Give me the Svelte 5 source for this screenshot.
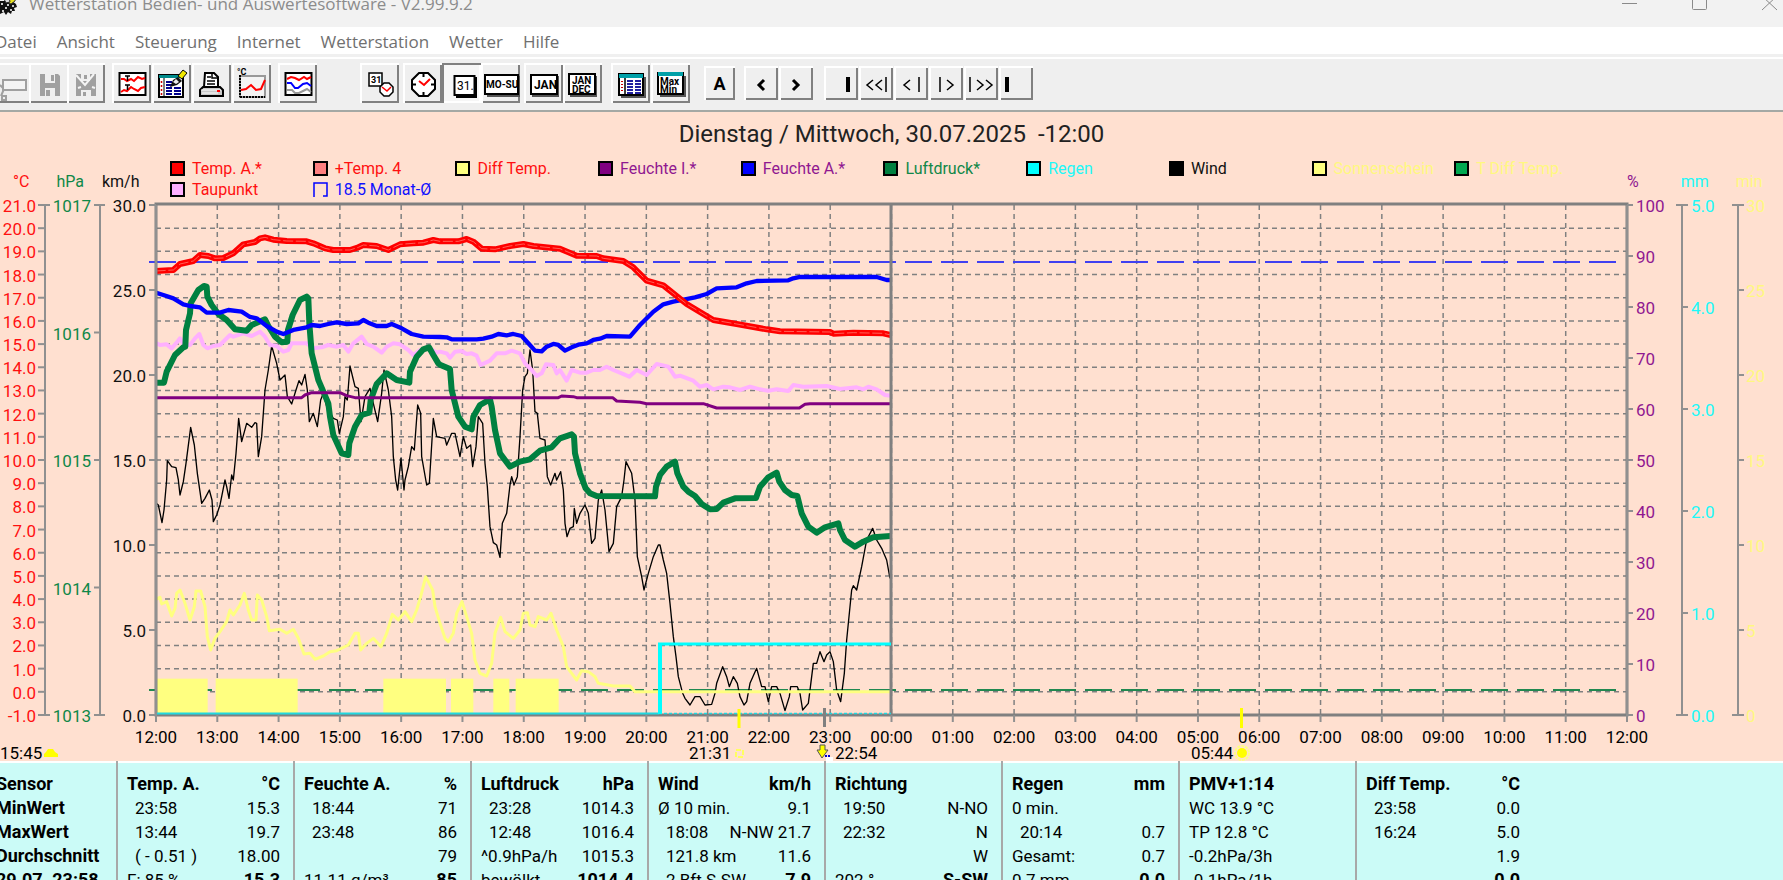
<svelte:head>
	<title>Wetterstation Bedien- und Auswertesoftware</title>
</svelte:head>

<script>
  const menu = ['Datei', 'Ansicht', 'Steuerung', 'Internet', 'Wetterstation', 'Wetter', 'Hilfe'];

  const legend = [
    { name: 'Temp. A.*', fill: '#ff0000', text: 'red' },
    { name: '+Temp. 4', fill: '#ff8080', text: 'red' },
    { name: 'Diff Temp.', fill: '#ffff80', text: 'red' },
    { name: 'Feuchte I.*', fill: '#800080', text: 'purple' },
    { name: 'Feuchte A.*', fill: '#0000ff', text: 'purple' },
    { name: 'Luftdruck*', fill: '#008040', text: 'green' },
    { name: 'Regen', fill: '#00ffff', text: 'cyan' },
    { name: 'Wind', fill: '#000000', text: 'black' },
    { name: 'Sonnenschein', fill: '#ffff80', text: 'yellow' },
    { name: 'T Diff Temp.', fill: '#00a850', text: 'yellow' },
    { name: 'Taupunkt', fill: '#ffb0ff', text: 'red' },
    { name: '18.5 Monat-Ø', fill: '', text: 'blue' },
  ];

  // plot area in chart units
  const left = 156;
  const right = 1627;
  const top = 205;
  const bottom = 715;

  const hourX = (h) => left + (right - left) * h / 24;
  const valueY = (v, min, max) => bottom - (bottom - top) * (v - min) / (max - min);

  const hours = Array.from({ length: 25 }, (_, i) => ({
    x: hourX(i),
    label: String((12 + i) % 24).padStart(2, '0') + ':00',
  }));

  function scale(min, max, step, digits) {
    const out = [];
    for (let v = min; v <= max; v += step) {
      out.push({ y: valueY(v, min, max), label: v.toFixed(digits) });
    }
    return out;
  }

  const temp = scale(-1, 21, 1, 1);
  const axes = [
    { cls: 'red', x: 45, labelX: 36, from: 38, to: 45, cap: 50, anchor: 'end', ticks: temp },
    { cls: 'green', x: 100, labelX: 91, from: 94, to: 100, cap: 105, anchor: 'end', ticks: scale(1013, 1017, 1, 0) },
    { cls: 'black', x: 156, labelX: 146, from: 149, to: 156, cap: 156, anchor: 'end', ticks: scale(0, 30, 5, 1) },
    { cls: 'purple', x: 1627, labelX: 1636, from: 1627, to: 1633, cap: 1627, anchor: 'start', ticks: scale(0, 100, 10, 0) },
    { cls: 'cyan', x: 1682, labelX: 1691, from: 1682, to: 1688, cap: 1676, anchor: 'start', ticks: scale(0, 5, 1, 1) },
    { cls: 'yellow', x: 1738, labelX: 1746, from: 1738, to: 1744, cap: 1732, anchor: 'start', ticks: scale(0, 30, 5, 0) },
  ];

  // Traces are logged at three steps per chart unit and in two blocks,
  // the second block starts at step 1320.
  function trace(first, second) {
    const late = second.split(' ').map((p) => {
      const [x, y] = p.split(',').map(Number);
      return (x + 1320) + ',' + y;
    });
    return first + ' ' + late.join(' ');
  }

  const tempA = trace(
    '467,243 520,240 540,222 580,213 600,195 625,198 645,205 670,204 700,190 730,163 765,156 780,145 795,142 820,149 860,153 920,154 940,160 975,175 1000,180 1050,180 1075,172 1090,165 1130,168 1165,180 1200,163 1240,160 1270,158 1300,150',
    '0,154 55,154 80,147 100,155 125,176 165,178 210,168 250,162 280,168 360,176 410,197 470,198 490,205 550,213 580,232 620,272 670,286 740,342 820,390 890,402 980,418 1020,424 1170,426 1180,431 1240,428 1330,430 1352,435'
  );
  const humidity = trace(
    '467,308 490,315 520,325 550,343 570,348 600,352 620,368 660,368 685,360 725,365 750,381 770,385 800,408 830,425 850,432 880,420 920,412 935,405 960,408 985,402 1010,397 1040,402 1075,400 1090,390 1105,398 1130,408 1160,408 1175,402 1205,415 1235,432 1270,440',
    '0,441 20,442 35,448 110,448 130,446 155,440 175,432 200,436 220,432 245,438 265,460 285,482 305,484 320,470 340,462 355,465 375,482 395,472 415,464 440,460 460,450 480,446 500,438 570,440 600,405 640,365 670,343 700,335 735,328 765,322 800,312 830,295 890,292 920,280 950,273 1045,271 1060,265 1080,261 1310,261 1340,270 1352,270'
  );
  const pressure = trace(
    '467,578 492,578 500,545 525,495 550,472 556,470 558,420 570,370 572,340 595,300 612,288 620,290 622,320 635,345 655,372 680,390 705,418 740,422 755,405 795,388 805,408 825,440 845,457 862,455 864,420 878,375 900,330 920,320 925,325 928,400 935,490 955,570 985,640 990,680 1000,735 1025,790 1045,795 1048,760 1065,710 1085,675 1108,668 1112,630 1130,582 1160,550 1190,570 1228,578 1230,545 1250,500 1270,478 1287,472 1300,495 1315,520',
    '0,524 30,537 35,600 45,640 55,680 75,710 95,718 100,680 120,645 150,628 155,650 165,720 180,790 210,830 240,815 270,808 300,782 335,772 360,745 395,733 402,740 405,790 420,850 437,895 450,910 470,918 645,919 648,890 660,855 680,830 705,815 712,850 730,890 745,905 765,918 785,942 810,958 830,957 850,938 885,925 948,924 960,890 985,862 1010,848 1018,875 1035,900 1055,915 1072,918 1085,970 1105,1010 1130,1028 1155,1012 1195,1000 1200,1020 1215,1050 1245,1070 1270,1055 1300,1042 1352,1038'
  );
  const dewPoint = trace(
    '467,458 480,465 500,463 515,475 530,458 540,445 550,462 570,465 585,445 598,432 610,465 622,475 640,468 660,465 675,450 690,435 700,440 730,430 755,438 780,425 795,440 810,465 830,468 850,485 865,480 875,460 920,460 940,475 965,472 985,465 1010,470 1030,465 1045,485 1060,460 1085,440 1100,462 1120,470 1145,488 1160,470 1180,460 1200,463 1225,480 1240,495 1260,480 1290,475 1310,488',
    '0,485 20,490 30,503 45,485 65,483 80,492 95,490 110,497 122,525 150,512 170,490 195,490 215,482 240,490 255,520 275,540 290,558 305,550 318,523 340,525 350,550 360,540 380,572 395,540 420,548 440,548 460,540 480,540 500,530 520,540 545,550 568,560 590,540 620,555 650,522 685,530 705,560 720,557 760,572 780,590 800,585 820,598 850,590 870,592 900,600 930,590 960,598 985,602 1010,598 1045,603 1060,585 1090,590 1160,588 1200,597 1250,592 1270,598 1285,590 1310,598 1335,615 1352,617'
  );
  const indoor = trace(
    '467,623 905,623 915,615 935,608 1020,608 1040,617 1065,623',
    '355,623 365,618 400,620 410,623 518,623 530,633 600,637 620,641 790,641 830,654 1078,654 1095,643 1110,641 1352,641'
  );
  const wind = trace(
    '467,938 475,945 486,998 492,960 500,870 502,812 515,830 528,833 535,870 540,915 550,875 558,820 572,712 583,765 592,850 600,905 605,940 615,925 628,900 636,930 640,995 650,975 660,945 668,905 675,870 680,890 687,925 695,855 700,870 708,790 716,685 725,755 740,700 755,712 765,698 770,700 775,800 785,740 795,600 805,540 815,468 830,520 840,570 855,555 862,620 875,642 888,600 897,572 905,585 915,553 922,600 928,695 940,670 952,710 962,630 970,610 980,650 1000,685 1012,690 1018,730 1030,680 1035,620 1042,630 1050,528 1065,590 1075,595 1083,695 1095,620 1110,595 1120,640 1133,695 1145,610 1152,540 1165,600 1175,680 1180,800 1187,870 1193,900 1203,805 1212,900 1215,870 1225,830 1235,770 1243,780 1253,645 1262,670 1265,800 1280,885 1288,880 1300,685 1310,740',
    '0,742 15,745 20,765 35,730 45,730 60,800 70,740 80,775 92,765 98,830 108,770 115,680 128,700 135,820 142,890 150,1010 160,1058 170,1065 180,1102 187,1000 200,970 210,885 215,860 222,885 232,860 240,740 248,600 255,560 262,550 270,480 278,540 285,665 292,670 300,745 315,750 322,860 332,885 345,850 350,870 362,845 370,900 375,1000 381,1040 390,1015 400,1010 403,955 410,1000 420,970 435,945 445,970 455,1060 465,1045 475,930 485,900 495,960 507,1085 520,1060 530,950 545,920 552,870 558,815 575,850 585,930 592,1100 605,1160 612,1200 625,1150 640,1100 655,1065 660,1065 670,1110 680,1150 690,1240 700,1340 708,1400 715,1460 728,1510 735,1525 750,1545 765,1520 780,1520 795,1545 815,1543 825,1510 830,1480 848,1430 860,1460 868,1490 880,1460 892,1480 900,1520 912,1545 920,1535 930,1480 950,1435 965,1490 975,1490 985,1535 995,1490 1010,1490 1020,1510 1035,1562 1048,1520 1052,1490 1072,1490 1080,1510 1088,1560 1105,1540 1120,1420 1130,1420 1140,1385 1152,1415 1160,1395 1170,1385 1180,1415 1190,1500 1202,1535 1213,1450 1220,1350 1235,1200 1240,1187 1250,1200 1265,1130 1280,1050 1298,1015 1310,1050 1325,1075 1340,1110 1350,1165'
  );
  const diffTemp = trace(
    '467,1228 480,1222 485,1242 500,1235 515,1278 525,1255 530,1210 540,1200 555,1240 570,1290 583,1250 588,1203 602,1203 615,1250 622,1340 632,1380 645,1345 660,1325 680,1295 690,1260 700,1275 720,1245 733,1210 745,1260 755,1290 768,1290 772,1215 785,1230 800,1280 808,1322 840,1318 860,1330 880,1318 895,1345 912,1392 930,1390 945,1408 970,1398 990,1385 1010,1382 1045,1365 1065,1330 1075,1330 1082,1380 1100,1360 1120,1345 1143,1370 1160,1330 1177,1273 1195,1290 1215,1265 1235,1295 1250,1260 1262,1220 1277,1160 1298,1200 1305,1250',
    '0,1300 15,1345 25,1355 40,1330 50,1270 66,1235 80,1280 95,1330 105,1410 120,1450 140,1458 155,1420 165,1330 182,1282 195,1325 220,1345 240,1320 250,1270 262,1268 270,1305 285,1310 295,1280 320,1290 333,1270 350,1320 370,1370 380,1430 395,1450 410,1470 425,1442 445,1445 465,1460 475,1480 520,1488 570,1488 585,1505 1352,1505'
  );

  const sunshine = [[467, 623], [647, 893], [1150, 1338], [1353, 1420], [1480, 1528], [1547, 1676]];

  const rows = ['Sensor', 'MinWert', 'MaxWert', 'Durchschnitt', '29.07. 23:58'];

  // i = indented text
  const sensors = [
    [{ t: 'Temp. A.', v: '°C' }, { t: '23:58', v: '15.3', i: 1 }, { t: '13:44', v: '19.7', i: 1 }, { t: '( - 0.51 )', v: '18.00', i: 1 }, { t: 'F: 85 %', v: '15.3' }],
    [{ t: 'Feuchte A.', v: '%' }, { t: '18:44', v: '71', i: 1 }, { t: '23:48', v: '86', i: 1 }, { t: '', v: '79' }, { t: '11.11 g/m³', v: '85' }],
    [{ t: 'Luftdruck', v: 'hPa' }, { t: '23:28', v: '1014.3', i: 1 }, { t: '12:48', v: '1016.4', i: 1 }, { t: '^0.9hPa/h', v: '1015.3' }, { t: 'bewölkt', v: '1014.4' }],
    [{ t: 'Wind', v: 'km/h' }, { t: 'Ø 10 min.', v: '9.1' }, { t: '18:08', v: 'N-NW 21.7', i: 1 }, { t: '121.8 km', v: '11.6', i: 1 }, { t: '2 Bft S-SW', v: '7.9', i: 1 }],
    [{ t: 'Richtung', v: '' }, { t: '19:50', v: 'N-NO', i: 1 }, { t: '22:32', v: 'N', i: 1 }, { t: '', v: 'W' }, { t: '202 °', v: 'S-SW' }],
    [{ t: 'Regen', v: 'mm' }, { t: '0 min.', v: '' }, { t: '20:14', v: '0.7', i: 1 }, { t: 'Gesamt:', v: '0.7' }, { t: '0.7 mm', v: '0.0' }],
    [{ t: 'PMV+1:14', v: '' }, { t: 'WC 13.9 °C', v: '' }, { t: 'TP 12.8 °C', v: '' }, { t: '-0.2hPa/3h', v: '' }, { t: '-0.1hPa/1h', v: '' }],
    [{ t: 'Diff Temp.', v: '°C' }, { t: '23:58', v: '0.0', i: 1 }, { t: '16:24', v: '5.0', i: 1 }, { t: '', v: '1.9' }, { t: '', v: '0.0' }],
  ];
</script>

<div class="window">
  <header class="titlebar">
    <svg class="app-icon" width="20" height="20" viewBox="0 0 20 20" aria-hidden="true">
      <path d="M0 6h12l4 3 1 3-3 1 1 3-3 0-1 3-3-2-2 3-2-3-4 2z" fill="#111" />
      <path d="M1 8h2v2h-2zM5 12h2v2h-2zM10 14h2v2h-2zM2 15h2v2h-2zM12 10h2v2h-2zM7 9h2v2h-2z" fill="#ccc" />
      <path d="M7 0h9l-1 6-4 3-4-2z" fill="#e8e020" stroke="#333" />
      <path d="M3 2h6l1 5-4 1z" fill="#ddd" stroke="#222" />
    </svg>
    <span class="caption">Wetterstation Bedien- und Auswertesoftware - V2.99.9.2</span>
    <div class="win-buttons">
      <button aria-label="Minimieren"><svg width="16" height="16" viewBox="0 0 16 16"><path d="M0 8.500h15" /></svg></button>
      <button aria-label="Maximieren"><svg width="16" height="16" viewBox="0 0 16 16"><rect x="0.500" y="0.500" width="14" height="14" rx="1" /></svg></button>
      <button aria-label="Schließen"><svg width="16" height="16" viewBox="0 0 16 16"><path d="M0 1l15 14M15 1L0 15" /></svg></button>
    </div>
  </header>

  <nav class="menubar">
    {#each menu as item}
      <button>{item}</button>
    {/each}
  </nav>

  <div class="toolbar">
    <div class="group first">
      <button class="tool" aria-label="Öffnen" disabled>
        <svg viewBox="0 0 40 40"><path d="M9 22l4 4-3 7M11 33h4v4h-4z" stroke="#a0a0a0" stroke-width="2" fill="none" /><rect x="12" y="17" width="23" height="10" stroke="#a0a0a0" stroke-width="2" fill="#f4f4f4" /></svg>
      </button>
      <button class="tool" aria-label="Speichern" disabled>
        <svg viewBox="0 0 40 40">
          <path d="M11 11h18l2 2v20h-20z" fill="#a0a0a0" /><path d="M16 11h10v9h-10zM16 25h10v8h-10z" fill="#efefef" />
          <path d="M22 12h3v6h-3zM17 27h4v6h-4z" fill="#a0a0a0" />
        </svg>
      </button>
      <button class="tool" aria-label="Speichern unter" disabled>
        <svg viewBox="0 0 40 40">
          <path d="M9 11h20v22h-20z" fill="#a0a0a0" /><path d="M14 11h9v7h-9zM14 27h10v6h-10z" fill="#efefef" />
          <path d="M9 12l9 10 9-11M11 25l3-1M25 24l3 1" stroke="#f4f4f4" stroke-width="2" fill="none" />
          <path d="M17 12h3v4h-3zM16 29h3v4h-3z" fill="#a0a0a0" />
        </svg>
      </button>
    </div>

    <div class="group gap-s">
      <button class="tool" aria-label="Grafik">
        <svg viewBox="0 0 40 40">
          <rect x="7.500" y="10" width="26" height="22" fill="#fff" stroke="#000" stroke-width="2" />
          <path d="M9 16h3l3 2 4-2 3 2 4-4 4 2 3-1M9 29l3-2 3 1 4-4 3 2 4 2 3-3 4-1" stroke="#f00" stroke-width="2" fill="none" />
          <path d="M13 13h5M15.500 13v5M13 22h5M15.500 22v5" stroke="#000" stroke-width="1.500" />
        </svg>
      </button>
      <button class="tool" aria-label="Daten bearbeiten">
        <svg viewBox="0 0 40 40">
          <rect x="7" y="12" width="24" height="22" fill="#fff" stroke="#000" stroke-width="2" />
          <path d="M7 12h24v3h-24z" fill="#008b8b" /><path d="M12 15v19" stroke="#000" />
          <path d="M14 19h6M14 22h6M14 25h6M14 28h6M14 31h6M22 25h7M22 28h7M22 31h7" stroke="#00008b" stroke-width="2" />
          <path d="M9.500 18v14" stroke="#c00" stroke-width="1.500" stroke-dasharray="2 2" />
          <path d="M18 24l3-7 5-3 4 4-5 4z" fill="#111" /><path d="M21 19l3-3 3 3-3 2z" fill="#eee" />
          <path d="M26 13l5-6 4 3-5 6z" fill="#f0e800" stroke="#000" />
        </svg>
      </button>
      <button class="tool" aria-label="Drucken">
        <svg viewBox="0 0 40 40">
          <path d="M12 24l1-14h9l4 4v10z" fill="#fff" stroke="#000" stroke-width="2" />
          <path d="M15 14h4M15 18h8M15 21h8M20 10v5h5" stroke="#000" fill="none" stroke-width="1.500" />
          <path d="M11 24h17l3 3v6h-23v-6z" fill="#c8c8c8" stroke="#000" stroke-width="2" />
          <path d="M9 27h20M10 30h16" stroke="#fff" /><path d="M25 28h3" stroke="#f00" stroke-width="2" />
        </svg>
      </button>
      <button class="tool" aria-label="Temperaturkurve">
        <svg viewBox="0 0 40 40">
          <rect x="8" y="13" width="25" height="21" fill="#f4f4f4" stroke="#999" stroke-width="2" />
          <path d="M8 12v22M8 34h25" stroke="#000" stroke-width="2" stroke-dasharray="2 1" />
          <path d="M9 27l5-1 5-4 5 5 5-1 4-9" stroke="#f00" stroke-width="2" fill="none" />
          <text x="5" y="12" class="icon-text small">°C</text>
        </svg>
      </button>
    </div>

    <div class="group gap-s">
      <button class="tool" aria-label="Kurvenvergleich">
        <svg viewBox="0 0 40 40">
          <rect x="7.500" y="10" width="26" height="22" fill="#fff" stroke="#000" stroke-width="2" />
          <path d="M9 16l4-2 4 1 4 2 5-3 3 2 4-2" stroke="#f00" stroke-width="2" fill="none" />
          <path d="M9 20h4l4 5h3l5-4 4-1 4 3" stroke="#00f" stroke-width="2" fill="none" />
          <path d="M9 27h5l3 3h4l4-2 4-2 4 3" stroke="#999" stroke-width="2" fill="none" />
        </svg>
      </button>
    </div>

    <div class="group gap-xl">
      <button class="tool" aria-label="Datum und Zeit">
        <svg viewBox="0 0 40 40">
          <path d="M9 10h13v13h-13z" fill="#fff" stroke="#000" stroke-width="1.500" />
          <text x="11" y="20" class="icon-text small">31</text>
          <path d="M24 20h5l4 4v5l-4 4h-5l-4-4v-5z" fill="#fff" stroke="#000" stroke-width="1.500" /><path d="M22 24l5 4 4-4" stroke="#f00" stroke-width="1.500" fill="none" />
        </svg>
      </button>
    </div>
    <div class="group tight gap-xs">
      <button class="tool" aria-label="Uhrzeit">
        <svg viewBox="0 0 40 40">
          <path d="M16 10h9l7 7v9l-7 7h-9l-7-7v-9z" fill="#fff" stroke="#000" stroke-width="2" />
          <path d="M20.500 11v3M20.500 29v3M10 21.500h3M28 21.500h3" stroke="#000" stroke-width="2" />
          <path d="M16 18l5 4 6-6" stroke="#f00" stroke-width="2" fill="none" />
        </svg>
      </button>
      <button class="tool pressed" aria-label="Tag">
        <svg viewBox="0 0 40 40">
          <path d="M14 34h20v-20" stroke="#000" stroke-width="2" fill="none" />
          <rect x="12.500" y="13" width="20" height="19" fill="#fff" stroke="#000" stroke-width="2" />
          <text x="15" y="27" class="icon-text large">31.</text>
        </svg>
      </button>
      <button class="tool" aria-label="Woche">
        <svg viewBox="0 0 40 40">
          <path d="M6 33h32v-20" stroke="#555" stroke-width="2" fill="none" />
          <rect x="4" y="12" width="33" height="19" fill="#fff" stroke="#000" stroke-width="2" />
          <text x="5" y="25" class="icon-text mini">MO-SU</text>
        </svg>
      </button>
    </div>
    <div class="group tight gap-xs">
      <button class="tool" aria-label="Monat">
        <svg viewBox="0 0 40 40">
          <path d="M8 33h26v-20" stroke="#555" stroke-width="2" fill="none" />
          <rect x="7" y="12" width="26" height="19" fill="#fff" stroke="#000" stroke-width="2" />
          <text x="10" y="26" class="icon-text">JAN</text>
        </svg>
      </button>
      <button class="tool" aria-label="Jahr">
        <svg viewBox="0 0 40 40">
          <path d="M7 33h26v-20" stroke="#555" stroke-width="2" fill="none" />
          <rect x="6" y="11" width="26" height="20" fill="#fff" stroke="#000" stroke-width="2" />
          <text x="9" y="21" class="icon-text mini">JAN</text>
          <text x="9" y="30" class="icon-text mini">DEC</text>
        </svg>
      </button>
    </div>
    <div class="group gap-m">
      <button class="tool" aria-label="Tabelle">
        <svg viewBox="0 0 40 40">
          <path d="M10 34h24v-20" stroke="#555" stroke-width="2" fill="none" />
          <rect x="8" y="11" width="24" height="21" fill="#fff" stroke="#000" stroke-width="2" />
          <path d="M8 11h24v4h-24z" fill="#00a0a8" /><path d="M14 15v17" stroke="#000" stroke-width="1.500" />
          <path d="M16 18h6M16 21h6M16 24h6M16 27h6M16 30h6M24 18h6M24 21h6M24 24h6M24 27h6M24 30h6" stroke="#2020a0" stroke-width="2" />
          <path d="M11 18v12" stroke="#c00" stroke-width="2" stroke-dasharray="1 2" />
        </svg>
      </button>
      <button class="tool" aria-label="Maximum Minimum">
        <svg viewBox="0 0 40 40">
          <path d="M9 33h25v-20" stroke="#555" stroke-width="2" fill="none" />
          <rect x="7" y="10" width="25" height="21" fill="#fff" stroke="#000" stroke-width="2" />
          <path d="M7 9h25v4h-25z" fill="#00a0a8" />
          <text x="9" y="22" class="icon-text mini">Max</text>
          <text x="9" y="30" class="icon-text mini">Min</text>
        </svg>
      </button>
    </div>

    <div class="group gap-l"><button class="tool low letter">A</button></div>
    <div class="group gap-m">
      <button class="tool low wide" aria-label="Zurück"><svg viewBox="0 0 34 34"><path d="M20 14l-5 5 5 5" class="nav bold" /></svg></button>
      <button class="tool low wide" aria-label="Vor"><svg viewBox="0 0 34 34"><path d="M14 14l5 5-5 5" class="nav bold" /></svg></button>
    </div>
    <div class="group gap-n">
      <button class="tool low wide" aria-label="Anfang"><svg viewBox="0 0 34 34"><path d="M24 11v15" class="nav thick" /></svg></button>
      <button class="tool low wide" aria-label="Schnell zurück"><svg viewBox="0 0 34 34"><path d="M14 14l-6 5 6 5M23 14l-6 5 6 5M27 11v15" class="nav" /></svg></button>
      <button class="tool low wide" aria-label="Schritt zurück"><svg viewBox="0 0 34 34"><path d="M16 14l-6 5 6 5M25 11v15" class="nav" /></svg></button>
      <button class="tool low wide" aria-label="Schritt vor"><svg viewBox="0 0 34 34"><path d="M11 11v15M18 14l6 5-6 5" class="nav" /></svg></button>
      <button class="tool low wide" aria-label="Schnell vor"><svg viewBox="0 0 34 34"><path d="M6 11v15M13 14l6 5-6 5M22 14l6 5-6 5" class="nav" /></svg></button>
      <button class="tool low wide" aria-label="Ende"><svg viewBox="0 0 34 34"><path d="M8 11v15" class="nav thick" /></svg></button>
    </div>
  </div>

  <main class="chart">
    <h1>Dienstag / Mittwoch, 30.07.2025 &nbsp;-12:00</h1>
    <div class="head">
      <div class="units units-left">
        <span class="red">°C</span><span class="green">hPa</span><span class="black">km/h</span>
      </div>
      <ul class="legend">
        {#each legend as item}
          <li class={item.text}>
            {#if item.fill}
              <svg class="swatch" viewBox="0 0 15 15"><rect x="1" y="1" width="13" height="13" fill={item.fill} stroke="#000" stroke-width="2" /></svg>
            {:else}
              <svg class="swatch" viewBox="0 0 15 15"><path d="M1 15v-14h13v13h-4" fill="none" stroke="#00f" stroke-width="1.500" /></svg>
            {/if}
            <span>{item.name}</span>
          </li>
        {/each}
      </ul>
      <div class="units units-right">
        <span class="purple">%</span><span class="cyan">mm</span><span class="yellow">min</span>
      </div>
    </div>

    <svg class="plot" viewBox="0 196 1783 565">
      <g class="grid">
        {#each temp.slice(1, -1) as t}
          <path d="M{left} {t.y}H{right}" />
        {/each}
        {#each hours.slice(1, -1) as h}
          <path d="M{h.x} {top}V{bottom}" />
        {/each}
      </g>
      <path class="mean blue-line" d="M149 262H1619" />
      <path class="mean green-line" d="M149 690H1619" />

      <g class="traces" transform="translate(0 190) scale(0.33333)">
        <polyline class="wind" points={wind} />
        <polyline class="dew" points={dewPoint} />
        <polyline class="diff" points={diffTemp} />
        {#each sunshine as [from, to]}
          <rect x={from} y="1466" width={to - from} height="106" fill="#ffff80" />
        {/each}
        <polyline class="pressure" points={pressure} />
        <polyline class="indoor" points={indoor} />
        <polyline class="humidity" points={humidity} />
        <polyline class="temp" points={tempA} />
        <polyline class="temp-core" points={tempA} />
      </g>

      <path class="frame" d="M{left} {top - 1}H{right}V{bottom}H{left}Z" />
      <path class="frame" d="M891 {top}V{bottom}" />
      <path d="M{left} 713.500H659" stroke="#20d8e0" stroke-width="2" />
      <path d="M659 713.500H891" stroke="#20d8e0" stroke-width="1.500" stroke-dasharray="3 2" />
      <path d="M660 714V644" stroke="#0ff" stroke-width="4" />
      <path d="M658 644H891" stroke="#0ff" stroke-width="3" />

      {#each axes as axis}
        <path class="axis" d="M{axis.x} {top}V{bottom}M{axis.x} {top}H{axis.cap}M{axis.x} {bottom}H{axis.cap}" />
        {#each axis.ticks as tick}
          <path class="axis" d="M{axis.from} {tick.y}H{axis.to}" />
          <text class={axis.cls} x={axis.labelX} y={tick.y + 7} text-anchor={axis.anchor}>{tick.label}</text>
        {/each}
      {/each}
      {#each hours as h}
        <path class="axis" d="M{h.x} {bottom}v7" />
        <text x={h.x} y="743" text-anchor="middle">{h.label}</text>
      {/each}

      <!-- moon and sun times -->
      <text x="0" y="759">15:45</text>
      <path d="M44 757v-3l2-2 2-3h5l2 3 3 2v3z" fill="#ff0" />
      <text x="689" y="759">21:31</text>
      <rect x="736" y="750" width="7" height="7" fill="none" stroke="#ffff60" stroke-width="2" stroke-dasharray="5 2" />
      <path d="M739 709v19" stroke="#ff0" stroke-width="3" />
      <path d="M824.500 708v19" stroke="#808080" stroke-width="3" />
      <path d="M820 745h5v5h3l-6 8-5-8h3z" fill="#ff0" stroke="#555" />
      <path d="M825 756h6" stroke="#00c" stroke-width="2" stroke-dasharray="2 1" /><path d="M826 759h7" stroke="#fff" stroke-width="4" />
      <text x="835" y="759">22:54</text>
      <text x="1191" y="759">05:44</text>
      <circle cx="1242" cy="753" r="7" fill="none" stroke="#ffff80" stroke-width="2" stroke-dasharray="3 1" />
      <circle cx="1242" cy="753" r="5" fill="#ff0" />
      <path d="M1241.500 708v20" stroke="#ff0" stroke-width="3" />
    </svg>
  </main>

  <table class="values">
    <tbody>
      {#each rows as row, r}
        <tr>
          <th scope="row">{row}</th>
          {#each sensors as s}
            <td>
              <div class="cell" class:head-cell={r === 0} class:current={r === 4}>
                <span class:indent={s[r].i}>{s[r].t}</span>
                <span class="value">{s[r].v}</span>
              </div>
            </td>
          {/each}
          <td class="rest"></td>
        </tr>
      {/each}
    </tbody>
  </table>
</div>

<style>
  :global(body) {
    margin: 0;
    overflow: hidden;
  }

  .window {
    height: 100vh;
    overflow: hidden;
    background: #cbfbf7;
    font-family: Roboto, "Liberation Sans", sans-serif;
    font-size: 18px;
    color: #000;
  }

  button {
    font: inherit;
    color: inherit;
    background: none;
    border: 0;
    padding: 0;
  }

  .titlebar {
    display: flex;
    height: 27px;
    background: #f2f2f2;
    font-family: "Open Sans", "Noto Sans", sans-serif;
    font-size: 17px;
    line-height: 22px;
    color: #8c8c8c;
  }

  .app-icon {
    margin-top: -5px;
    flex: none;
  }

  .caption {
    margin-top: -7px;
    padding-left: 9px;
    white-space: nowrap;
  }

  .win-buttons {
    display: flex;
    gap: 54px;
    margin-left: auto;
    margin-right: 5px;
    margin-top: -5px;
    height: 16px;
  }

  .win-buttons svg {
    display: block;
    fill: none;
    stroke: #8a8a8a;
  }

  .menubar {
    display: flex;
    gap: 20px;
    height: 27px;
    padding-top: 1px;
    box-sizing: border-box;
    margin-left: -5px;
    background: #fff;
    font-family: "Open Sans", "Noto Sans", sans-serif;
    font-size: 17px;
    color: #707070;
  }

  .toolbar {
    display: flex;
    box-sizing: border-box;
    height: 58px;
    padding-top: 9px;
    background: linear-gradient(#f0f0f0 3px, #fff 3px, #fff 5px, #efefef 5px);
    border-bottom: 2px solid #a4a8a4;
  }

  .group {
    display: flex;
    gap: 1px;
    flex: none;
  }

  .group.tight {
    gap: 0;
  }

  .group.first {
    gap: 0;
    margin-left: -9px;
  }

  .gap-xs { margin-left: 4px; }
  .gap-s { margin-left: 7px; }
  .gap-m { margin-left: 9px; }
  .gap-n { margin-left: 11px; }
  .gap-l { margin-left: 14px; }
  .gap-xl { margin-left: 43px; }

  .tool {
    width: 39px;
    height: 40px;
    background: #efefef;
    box-shadow: inset 2px 2px #fff, inset -2px -2px #808080;
  }

  .first .tool {
    width: 38px;
    box-shadow: inset 2px 2px #fff, inset 0 -2px #808080;
  }

  .first .tool:last-child {
    box-shadow: inset 2px 2px #fff, inset -2px -2px #808080;
  }

  .tool svg {
    display: block;
    width: 40px;
    height: 40px;
  }

  .tool.pressed {
    background: #f6f6f6;
    box-shadow: inset 2px 2px #808080, inset -2px -2px #fff;
  }

  .tool.low {
    width: 31px;
    height: 34px;
    margin-top: 3px;
  }

  .tool.low.wide {
    width: 34px;
  }

  .tool.low svg {
    width: 34px;
    height: 34px;
  }

  .letter {
    font-size: 18px;
    font-weight: bold;
  }

  .nav {
    fill: none;
    stroke: #000;
    stroke-width: 1.500;
  }

  .nav.bold { stroke-width: 3; }
  .nav.thick { stroke-width: 4; }

  .icon-text {
    font-size: 12px;
    font-weight: bold;
  }

  .icon-text.small { font-size: 9px; }
  .icon-text.mini { font-size: 10px; }
  .icon-text.large { font-weight: normal; }

  .chart {
    background: #ffe0d0;
  }

  h1 {
    margin: 0;
    padding-top: 8px;
    font-size: 24px;
    line-height: 28px;
    font-weight: normal;
    text-align: center;
    color: #222;
  }

  .head {
    display: flex;
    padding-top: 10px;
    height: 38px;
    font-size: 16px;
    line-height: 21px;
  }

  .units {
    display: flex;
    align-items: flex-end;
    flex: none;
    padding-bottom: 4px;
  }

  .units-left {
    width: 156px;
    gap: 18px;
    padding-left: 13px;
    box-sizing: border-box;
    margin-right: 14px;
  }

  .units-left span:first-child { margin-right: 9px; }

  .units-right {
    width: 156px;
    margin-left: 30px;
    gap: 27px;
  }

  .units-right span:first-child { margin-right: 15px; }

  .legend {
    flex: 1;
    display: grid;
    grid-template-columns: repeat(10, 1fr);
    grid-auto-rows: 21px;
    margin: 0;
    padding: 0;
    list-style: none;
  }

  .legend li {
    display: flex;
    align-items: center;
    gap: 7px;
    white-space: nowrap;
  }

  .swatch {
    width: 15px;
    height: 15px;
    flex: none;
  }

  .red { color: #ff1010; fill: #ff1010; }
  .green { color: #108848; fill: #108848; }
  .purple { color: #901890; fill: #901890; }
  .blue { color: #1010ff; }
  .cyan { color: #20f8f8; fill: #20f8f8; }
  .yellow { color: #fff880; fill: #fff880; }
  .black { color: #111; fill: #111; }

  .plot {
    display: block;
    width: 100%;
    overflow: visible;
    font-size: 17px;
  }

  .grid path {
    stroke: #808080;
    stroke-width: 1.500;
    stroke-dasharray: 5 4;
  }

  .mean {
    stroke-width: 2;
    stroke-dasharray: 27 9;
  }

  .blue-line { stroke: #4040f0; }
  .green-line { stroke: #208850; }

  .frame {
    fill: none;
    stroke: #808080;
    stroke-width: 3;
  }

  .axis {
    fill: none;
    stroke: #909090;
    stroke-width: 2;
  }

  .traces polyline {
    fill: none;
    stroke-linejoin: round;
  }

  .traces .wind { stroke: #000; stroke-width: 4; }
  .traces .dew { stroke: #ffb0ff; stroke-width: 12; }
  .traces .diff { stroke: #ffff80; stroke-width: 9; }
  .traces .pressure { stroke: #008040; stroke-width: 18; }
  .traces .indoor { stroke: #800080; stroke-width: 9; }
  .traces .humidity { stroke: #0000ff; stroke-width: 13; }
  .traces .temp { stroke: #ff0000; stroke-width: 18; }
  .traces .temp-core { stroke: #ff9080; stroke-width: 2; stroke-dasharray: 30 8; }

  .values {
    width: 100%;
    table-layout: fixed;
    border-collapse: collapse;
    border-top: 2px solid #fff;
    font-size: 17px;
    line-height: 24px;
  }

  .values th {
    width: 116px;
    padding: 0;
    font-size: 18px;
    text-align: left;
    text-indent: -4px;
    white-space: nowrap;
  }

  .values td {
    width: 177px;
    box-sizing: border-box;
    padding: 0 13px 0 9px;
    border-left: 2px solid #a8a8a8;
  }

  .values td.rest {
    width: auto;
    border: 0;
  }

  .values tr:first-child th,
  .values tr:first-child td {
    padding-top: 9px;
  }

  .cell {
    display: flex;
    justify-content: space-between;
    height: 24px;
    white-space: nowrap;
  }

  .indent { padding-left: 8px; }

  .head-cell,
  .current .value {
    font-size: 18px;
    font-weight: bold;
  }
</style>
